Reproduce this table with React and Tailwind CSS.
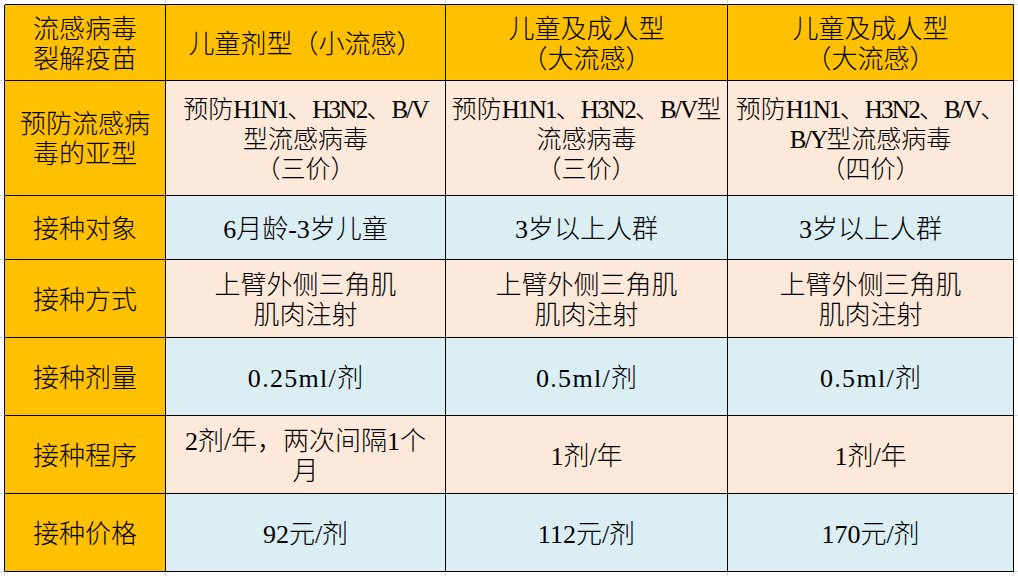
import React from "react";

const L = ({ children }) => <span className="tracking-[-0.07em]">{children}</span>;
const W = ({ children }) => <span className="tracking-[0.05em]">{children}</span>;

const rows = [
  {
    bg: "bg-[#FFC000]",
    cells: [
      <>流感病毒<br />裂解疫苗</>,
      <>儿童剂型（小流感）</>,
      <>儿童及成人型<br />（大流感）</>,
      <>儿童及成人型<br />（大流感）</>,
    ],
  },
  {
    bg: "bg-[#FDE9D9]",
    small: true,
    cells: [
      <>预防流感病<br />毒的亚型</>,
      <>预防<L>H1N1</L>、<L>H3N2</L>、<L>B/V</L><br />型流感病毒<br />（三价）</>,
      <>预防<L>H1N1</L>、<L>H3N2</L>、<L>B/V</L>型<br />流感病毒<br />（三价）</>,
      <>预防<L>H1N1</L>、<L>H3N2</L>、<L>B/V</L>、<br /><L>B/Y</L>型流感病毒<br />（四价）</>,
    ],
  },
  {
    bg: "bg-[#DAEEF3]",
    cells: [<>接种对象</>, <>6月龄-3岁儿童</>, <>3岁以上人群</>, <>3岁以上人群</>],
  },
  {
    bg: "bg-[#FDE9D9]",
    cells: [
      <>接种方式</>,
      <>上臂外侧三角肌<br />肌肉注射</>,
      <>上臂外侧三角肌<br />肌肉注射</>,
      <>上臂外侧三角肌<br />肌肉注射</>,
    ],
  },
  {
    bg: "bg-[#DAEEF3]",
    cells: [<>接种剂量</>, <><W>0.25ml/</W>剂</>, <><W>0.5ml/</W>剂</>, <><W>0.5ml/</W>剂</>],
  },
  {
    bg: "bg-[#FDE9D9]",
    cells: [<>接种程序</>, <>2剂/年，两次间隔1个<br />月</>, <>1剂/年</>, <>1剂/年</>],
  },
  {
    bg: "bg-[#DAEEF3]",
    cells: [<>接种价格</>, <>92元/剂</>, <>112元/剂</>, <>170元/剂</>],
  },
];

export default function App() {
  const out = [];
  out.push(<div key="tl" />);
  for (let c = 0; c < 4; c++) {
    out.push(<div key={"t" + c} className="border-r border-r-[#d9d9d9] border-b border-b-black" />);
  }
  out.push(<div key="tr" className="border-b border-b-[#d9d9d9]" />);

  rows.forEach((row, r) => {
    out.push(<div key={"l" + r} className="border-r border-r-black border-b border-b-[#d9d9d9]" />);
    row.cells.forEach((cell, c) => {
      const bg = c === 0 ? "bg-[#FFC000]" : row.bg;
      const size = row.small && c > 0 ? "text-[25px]" : "";
      out.push(
        <div
          key={r + "-" + c}
          className={`${bg} ${size} border-r border-b border-black flex items-center justify-center text-center whitespace-nowrap pt-[4px]`}
        >
          <div>{cell}</div>
        </div>
      );
    });
    out.push(<div key={"r" + r} className="border-b border-b-[#d9d9d9]" />);
  });

  out.push(<div key="bl" className="border-r border-r-[#d9d9d9]" />);
  for (let c = 0; c < 4; c++) {
    out.push(<div key={"b" + c} className="border-r border-r-[#d9d9d9]" />);
  }
  out.push(<div key="br" />);

  return (
    <div
      className="w-[1018px] h-[576px] bg-white text-black text-[26px] leading-[30px] font-light grid grid-cols-[5px_161px_280px_282px_286px_4px] grid-rows-[5px_76px_115px_64px_78px_78px_78px_78px_4px] overflow-hidden"
      style={{ fontFamily: '"Liberation Serif", "Noto Sans CJK SC", serif' }}
    >
      {out}
    </div>
  );
}
